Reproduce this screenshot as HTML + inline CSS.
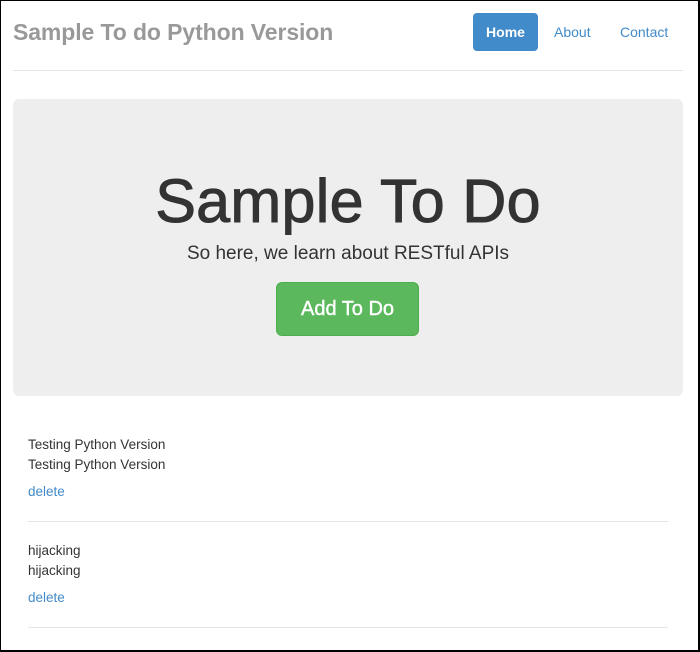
<!DOCTYPE html>
<html><head><style>
*{margin:0;padding:0;box-sizing:border-box}
body{width:700px;height:652px;position:relative;background:#fff;font-family:"Liberation Sans",Helvetica,Arial,sans-serif;overflow:hidden}
.frame{position:absolute;left:0;top:0;width:700px;height:652px;border:1px solid #000;border-right-width:2px;border-bottom-width:2px}
.a{position:absolute;white-space:nowrap}
</style></head><body>
<div class="a" style="left:13px;top:19px;font-size:23px;font-weight:bold;color:#999;letter-spacing:-0.1px">Sample To do Python Version</div>
<div class="a" style="left:473px;top:13px;width:65px;height:38px;background:#428bca;border-radius:4px;color:#fff;font-size:14px;font-weight:bold;text-align:center;line-height:38px">Home</div>
<div class="a" style="left:554px;top:24px;font-size:14px;color:#428bca">About</div>
<div class="a" style="left:620px;top:24px;font-size:14px;color:#428bca">Contact</div>
<div class="a" style="left:13px;top:70px;width:670px;height:1px;background:#e5e5e5"></div>
<div class="a" style="left:13px;top:99px;width:670px;height:297px;background:#eee;border-radius:6px"></div>
<div class="a" style="left:13px;top:166px;width:670px;text-align:center;font-size:61px;color:#333;line-height:70px;-webkit-text-stroke:1px #333;letter-spacing:0.3px">Sample To Do</div>
<div class="a" style="left:13px;top:243px;width:670px;text-align:center;font-size:19px;color:#333">So here, we learn about RESTful APIs</div>
<div class="a" style="left:276px;top:282px;width:143px;height:54px;background:#5cb85c;border:1px solid #4cae4c;border-radius:6px;color:#fff;font-size:20px;text-align:center;line-height:52px;-webkit-text-stroke:0.4px #fff">Add To Do</div>
<div class="a" style="left:28px;top:435px;font-size:13.5px;line-height:20px;color:#333">Testing Python Version<br>Testing Python Version</div>
<div class="a" style="left:28px;top:484px;font-size:13.5px;color:#428bca">delete</div>
<div class="a" style="left:28px;top:521px;width:640px;height:1px;background:#e5e5e5"></div>
<div class="a" style="left:28px;top:541px;font-size:13.5px;line-height:20px;color:#333">hijacking<br>hijacking</div>
<div class="a" style="left:28px;top:590px;font-size:13.5px;color:#428bca">delete</div>
<div class="a" style="left:28px;top:627px;width:640px;height:1px;background:#e5e5e5"></div>
<div class="frame"></div>
</body></html>
